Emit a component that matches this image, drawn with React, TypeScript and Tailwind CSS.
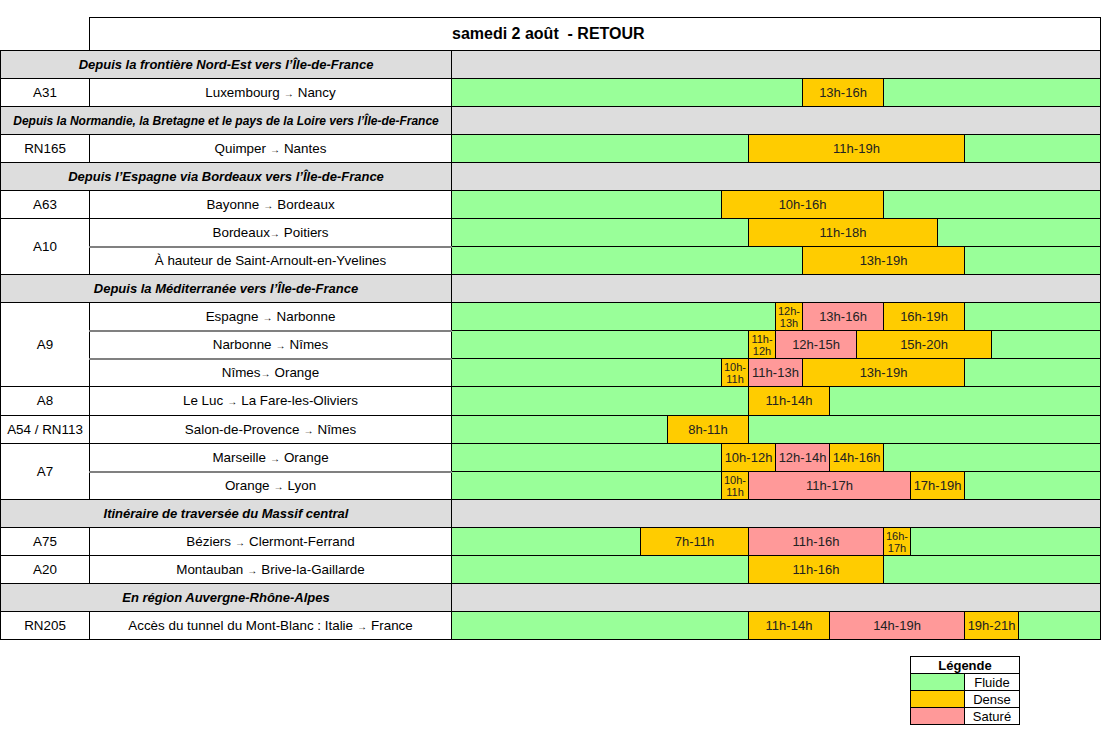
import React from "react";

type Level = "D" | "S";
type Seg = { from: number; to: number; level: Level };
type Row = { road?: string; span?: number; route: React.ReactNode; segs: Seg[]; sub?: boolean; tall?: boolean };
type Section = { title: string; small?: boolean; rows: Row[] };

const HOUR = 27;

const Arrow = () => <span className="inline-block align-baseline text-[10px] mx-[4px]">→</span>;

const r = (a: string, b: string, tight = false) => (
  <>
    {a}
    {tight ? <span className="inline-block align-baseline text-[10px] mr-[4px]">→</span> : <Arrow />}
    {b}
  </>
);

const sections: Section[] = [
  {
    title: "Depuis la frontière Nord-Est vers l’Île-de-France",
    rows: [{ road: "A31", route: r("Luxembourg", "Nancy"), segs: [{ from: 13, to: 16, level: "D" }] }],
  },
  {
    title: "Depuis la Normandie, la Bretagne et le pays de la Loire vers l’Île-de-France",
    small: true,
    rows: [{ road: "RN165", route: r("Quimper", "Nantes"), segs: [{ from: 11, to: 19, level: "D" }] }],
  },
  {
    title: "Depuis l’Espagne via Bordeaux vers l’Île-de-France",
    rows: [
      { road: "A63", route: r("Bayonne", "Bordeaux"), segs: [{ from: 10, to: 16, level: "D" }] },
      { road: "A10", span: 2, route: r("Bordeaux", "Poitiers", true), segs: [{ from: 11, to: 18, level: "D" }] },
      { route: "À hauteur de Saint-Arnoult-en-Yvelines", sub: true, segs: [{ from: 13, to: 19, level: "D" }] },
    ],
  },
  {
    title: "Depuis la Méditerranée vers l’Île-de-France",
    rows: [
      {
        road: "A9",
        span: 3,
        route: r("Espagne", "Narbonne"),
        segs: [
          { from: 12, to: 13, level: "D" },
          { from: 13, to: 16, level: "S" },
          { from: 16, to: 19, level: "D" },
        ],
      },
      {
        route: r("Narbonne", "Nîmes"),
        sub: true,
        segs: [
          { from: 11, to: 12, level: "D" },
          { from: 12, to: 15, level: "S" },
          { from: 15, to: 20, level: "D" },
        ],
      },
      {
        route: r("Nîmes", "Orange", true),
        sub: true,
        segs: [
          { from: 10, to: 11, level: "D" },
          { from: 11, to: 13, level: "S" },
          { from: 13, to: 19, level: "D" },
        ],
      },
      { road: "A8", tall: true, route: r("Le Luc", "La Fare-les-Oliviers"), segs: [{ from: 11, to: 14, level: "D" }] },
      { road: "A54 / RN113", route: r("Salon-de-Provence", "Nîmes"), segs: [{ from: 8, to: 11, level: "D" }] },
      {
        road: "A7",
        span: 2,
        route: r("Marseille", "Orange"),
        segs: [
          { from: 10, to: 12, level: "D" },
          { from: 12, to: 14, level: "S" },
          { from: 14, to: 16, level: "D" },
        ],
      },
      {
        route: r("Orange", "Lyon"),
        sub: true,
        segs: [
          { from: 10, to: 11, level: "D" },
          { from: 11, to: 17, level: "S" },
          { from: 17, to: 19, level: "D" },
        ],
      },
    ],
  },
  {
    title: "Itinéraire de traversée du Massif central",
    rows: [
      {
        road: "A75",
        route: r("Béziers", "Clermont-Ferrand"),
        segs: [
          { from: 7, to: 11, level: "D" },
          { from: 11, to: 16, level: "S" },
          { from: 16, to: 17, level: "D" },
        ],
      },
      { road: "A20", route: r("Montauban", "Brive-la-Gaillarde"), segs: [{ from: 11, to: 16, level: "D" }] },
    ],
  },
  {
    title: "En région Auvergne-Rhône-Alpes",
    rows: [
      {
        road: "RN205",
        route: (
          <>
            Accès du tunnel du Mont-Blanc : Italie
            <Arrow />
            France
          </>
        ),
        segs: [
          { from: 11, to: 14, level: "D" },
          { from: 14, to: 19, level: "S" },
          { from: 19, to: 21, level: "D" },
        ],
      },
    ],
  },
];

function Timeline({ segs, tall }: { segs: Seg[]; tall?: boolean }) {
  return (
    <div className={"relative " + (tall ? "h-[28px]" : "h-[27px]")}>
      {segs.map((s, i) => {
        const oneHour = s.to - s.from === 1;
        return (
          <div
            key={i}
            className={
              "absolute top-0 bottom-0 flex items-center justify-center border-x border-black text-[#222] " +
              (s.level === "D" ? "bg-[#ffcc00]" : "bg-[#ff9999]")
            }
            style={{ left: s.from * HOUR - 1, width: (s.to - s.from) * HOUR + 1 }}
          >
            {oneHour ? (
              <span className="text-[11px] leading-[12px] text-center">
                {s.from}h-
                <br />
                {s.to}h
              </span>
            ) : (
              <span className="text-[13px]">
                {s.from}h-{s.to}h
              </span>
            )}
          </div>
        );
      })}
    </div>
  );
}

export default function App() {
  return (
    <div className="min-h-[750px] w-[1106px] bg-white pt-[17px] text-black font-['Liberation_Sans',Arial,sans-serif]">
      <table className="table-fixed border-collapse w-[1100px]">
        <colgroup>
          <col className="w-[89px]" />
          <col className="w-[362px]" />
          <col className="w-[649px]" />
        </colgroup>
        <tbody>
          <tr className="h-[33px]">
            <td className="p-0" />
            <td colSpan={2} className="border border-black p-0 pl-[362px] text-left text-[16px] font-bold">
              samedi 2 août&nbsp; - RETOUR
            </td>
          </tr>
          {sections.map((sec) => (
            <React.Fragment key={sec.title}>
              <tr className="h-[28px] bg-[#dddddd]">
                <td
                  colSpan={2}
                  className={
                    "border border-black p-0 text-center font-bold italic whitespace-nowrap " +
                    (sec.small ? "text-[12px]" : "text-[13px]")
                  }
                >
                  {sec.title}
                </td>
                <td className="border border-black p-0" />
              </tr>
              {sec.rows.map((row, i) => (
                <tr key={i} className={row.tall ? "h-[29px]" : "h-[28px]"}>
                  {row.road && (
                    <td rowSpan={row.span ?? 1} className="border border-black p-0 pt-px text-center text-[13.4px] whitespace-nowrap">
                      {row.road}
                    </td>
                  )}
                  <td
                    className={
                      "border-x border-b border-black p-0 pt-px text-center text-[13.4px] whitespace-nowrap " +
                      (row.sub ? "border-t-2 border-t-[#808080]" : "border-t")
                    }
                  >
                    {row.route}
                  </td>
                  <td className="border border-black p-0 bg-[#99ff99] align-top">
                    <Timeline segs={row.segs} tall={row.tall} />
                  </td>
                </tr>
              ))}
            </React.Fragment>
          ))}
        </tbody>
      </table>

      <table className="mt-[16px] ml-[910px] border-collapse table-fixed w-[109px] text-[13px]">
        <colgroup>
          <col className="w-[54px]" />
          <col className="w-[55px]" />
        </colgroup>
        <tbody>
          <tr className="h-[17px]">
            <td colSpan={2} className="border border-black p-0 text-center font-bold leading-[15px]">
              Légende
            </td>
          </tr>
          {[
            ["bg-[#99ff99]", "Fluide"],
            ["bg-[#ffcc00]", "Dense"],
            ["bg-[#ff9999]", "Saturé"],
          ].map(([bg, label]) => (
            <tr key={label} className="h-[17px]">
              <td className={"border border-black p-0 " + bg} />
              <td className="border border-black p-0 text-center leading-[15px]">{label}</td>
            </tr>
          ))}
        </tbody>
      </table>
    </div>
  );
}
